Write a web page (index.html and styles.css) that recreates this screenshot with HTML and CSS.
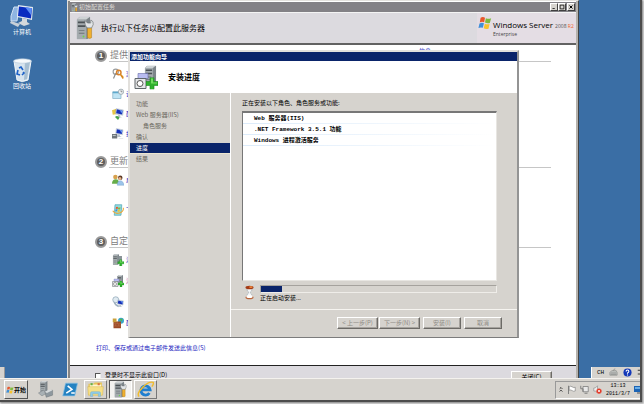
FILE: index.html
```html
<!DOCTYPE html>
<html lang="zh-CN">
<head>
    <meta charset="UTF-8">
    <meta name="viewport" content="width=device-width, initial-scale=1.0">
    <title>初始配置任务</title>
    <link rel="stylesheet" href="styles.css">
</head>
<body>
    <!-- Shared icons -->
    <svg class="sprite" aria-hidden="true">
        <symbol id="flag" viewBox="0 0 16 16">
            <path d="M3 2Q5.500 .5 8 2L7 7Q4.500 6 2 7.300Z" fill="#e8562a"/>
            <path d="M9 2.500Q12 4 15 2.500L13.500 8Q11 9 8 7.500Z" fill="#7fba3c"/>
            <path d="M1.700 8.500Q4.500 7 6.800 8.300L5.500 13.500Q3 12.500 .5 13.700Z" fill="#3f8fd8"/>
            <path d="M7.800 8.800Q10.500 10 13.200 9L12 14.500Q9 15.500 6.500 14Z" fill="#f8c22c"/>
        </symbol>
        <symbol id="server" viewBox="0 0 16 24">
            <path d="M1 3L4 0H15V21L12 24H1Z" fill="#7d858a"/>
            <path d="M1 3H11V24H1Z" fill="#a4abae"/>
            <path d="M1 3L4 0H15L11 3Z" fill="#cdd2d4"/>
            <path d="M2 5H10V7H2ZM2 9H10V11H2Z" fill="#4b5256"/>
            <path d="M3 14H9V15H3ZM3 17H9V18H3Z" fill="#6c7478"/>
            <circle cx="8" cy="21" r="1" fill="#6ad54a"/>
        </symbol>
        <symbol id="wrench" viewBox="0 0 12 24">
            <path d="M4 9H9V22Q7 24 4 22Z" fill="#f0b02e" stroke="#a8741a" stroke-width=".6"/>
            <path d="M1 1L4 4L8 4L8 0Q12 2 11 6L9 10H4Q0 7 1 1Z" fill="#e3e6e8" stroke="#676d70" stroke-width=".8"/>
        </symbol>
        <symbol id="tools" viewBox="0 0 24 32">
            <use href="#server" x="0" y="1" width="20" height="30"/>
            <use href="#wrench" x="11" y="5" width="13" height="26"/>
        </symbol>
        <symbol id="plus" viewBox="0 0 12 12">
            <path d="M4 0H8V4H12V8H8V12H4V8H0V4H4Z" fill="#2fb22c" stroke="#1a8420" stroke-width=".6"/>
            <path d="M5 1H7V5H11V6H5Z" fill="#74dc62"/>
        </symbol>
        <symbol id="screen" viewBox="0 0 16 16">
            <path d="M4 1L15 3L14 11L3 9Z" fill="#dfe6ee" stroke="#8193a8" stroke-width=".6"/>
            <path d="M5 2L14 4L13 10L4 8Z" fill="#1530b8"/>
            <path d="M9 3L14 4L13 8Z" fill="#6e9bf2"/>
            <path d="M7 10L10 11V13L13 14L8 15L4 13L7 12Z" fill="#b9c3cb"/>
        </symbol>
        <symbol id="add-role" viewBox="0 0 24 24">
            <use href="#server" x="1" y="0" width="14" height="22"/>
            <path d="M13 4H20V17H13Z" fill="#8b9499"/>
            <use href="#plus" x="11" y="11" width="13" height="13"/>
        </symbol>
        <symbol id="add-feature" viewBox="0 0 24 24">
            <use href="#server" x="9" y="0" width="15" height="19"/>
            <path d="M4 8H14V13H4Z" fill="#b9bcf0" stroke="#666ca8" stroke-width=".6"/>
            <path d="M1 13H12V23H1Z" fill="#e4e6e8" stroke="#60676b"/>
            <circle cx="6" cy="18" r="3" fill="#fff" stroke="#555"/>
            <use href="#plus" x="12" y="12" width="12" height="12"/>
        </symbol>
    </svg>

    <div class="screen">
        <main class="desktop">
            <nav class="shortcuts">
                <a class="shortcut" href="#computer">
                    <svg viewBox="0 0 24 24">
                        <path d="M1 12L4 3H9L7 17H1Z" fill="#8fb5e2" stroke="#cfe0f3"/>
                        <path d="M8 1L23 3L22 16L7 13Z" fill="#e3e9ef"/>
                        <path d="M9 2.500L22 4.300L21 14.500L8 12Z" fill="#0a2cc0"/>
                        <path d="M15 3L22 4.300L21 11Z" fill="#5a8cf4"/>
                        <path d="M12 14L17 15V18L20 20L14 22L8 19L12 17Z" fill="#d3d8dc"/>
                        <path d="M1 17L10 20L8 23L0 19Z" fill="#c8d0d8"/>
                    </svg>
                    计算机
                </a>
                <a class="shortcut" href="#recycle">
                    <svg viewBox="0 0 24 24">
                        <path d="M4 3L21 3L18 22Q12 25 7 22Z" fill="#d7e4ee" stroke="#f4f8fb"/>
                        <path d="M15 4H20L17 21L14 22Z" fill="#a7bfd2"/>
                        <ellipse cx="12.500" cy="3" rx="9" ry="2.200" fill="#f6f9fb" stroke="#b4c8d8" stroke-width=".6"/>
                        <path d="M9 10L11 9L13 12M8 12L7 16L10 17M12 17L14 15L13 14" fill="none" stroke="#1e62c8" stroke-width="1.600"/>
                    </svg>
                    回收站
                </a>
            </nav>

            <section class="window">
                <header class="titlebar">
                    <svg class="title-icon" viewBox="0 0 24 32"><use href="#tools"/></svg>
                    <span class="title-text">初始配置任务</span>
                    <button class="caption-button" aria-label="最小化"><svg viewBox="0 0 8 8"><path d="M2 6H5" stroke="#000"/></svg></button>
                    <button class="caption-button" aria-label="最大化"><svg viewBox="0 0 8 8"><path d="M1.500 1.500H6.500V6.500H1.500Z" fill="none" stroke="#000"/></svg></button>
                    <button class="caption-button close" aria-label="关闭窗口"><svg viewBox="0 0 8 8"><path d="M2 2L6 6M6 2L2 6" stroke="#000" stroke-width="1.300"/></svg></button>
                </header>
                <div class="banner">
                    <svg class="banner-icon" viewBox="0 0 24 32"><use href="#tools"/></svg>
                    <h1>执行以下任务以配置此服务器</h1>
                    <div class="brand">
                        <svg class="brand-flag" viewBox="0 0 16 16"><use href="#flag"/></svg>
                        <div>
                            <div class="brand-name">Windows Server <small>2008 <b>R2</b></small></div>
                            <div class="brand-edition">Enterprise</div>
                        </div>
                    </div>
                </div>

                <div class="tasks">
                    <section class="group">
                        <h2>
                            <span class="step">1</span>
                            <span class="group-title">提供</span>
                            <a class="group-help" href="#help">信息</a>
                        </h2>
                        <ul>
                            <li>
                                <svg viewBox="0 0 16 16"><circle cx="5" cy="5" r="3.500" fill="none" stroke="#9a9d9e" stroke-width="1.500"/><path d="M5 7L2 14" stroke="#888" stroke-width="1.500"/><circle cx="9" cy="6" r="3" fill="none" stroke="#d9822b" stroke-width="2"/><path d="M11 8L15 14M13 12L15 11" stroke="#d98a20" stroke-width="2"/></svg>
                                <a href="#activate">激</a>
                            </li>
                            <li>
                                <svg viewBox="0 0 16 16"><path d="M1 5H12V14H1Z" fill="#bfe4f4" stroke="#8ab3c8"/><path d="M1 5H12V7H1Z" fill="#5fa9cc"/><circle cx="12" cy="5" r="3.500" fill="#eef3f5" stroke="#8e9ba1"/><path d="M12 3V5H14" fill="none" stroke="#555" stroke-width=".8"/></svg>
                                <a href="#timezone">设</a>
                            </li>
                            <li>
                                <svg viewBox="0 0 16 16"><path d="M0 3L6 1L7 8L1 9Z" fill="#e6c645"/><use href="#screen" x="2" y="0" width="14" height="14"/><path d="M4 12Q7 9 10 13L8 16Z" fill="#49a54a"/></svg>
                                <a href="#network">配</a>
                            </li>
                            <li>
                                <svg viewBox="0 0 16 16"><use href="#screen" x="2" y="0" width="14" height="13"/><path d="M0 8H7V14H0Z" fill="#70777b"/><path d="M1 10H5M9 14H15" stroke="#dce1e4"/></svg>
                                <a href="#domain">提</a>
                            </li>
                        </ul>
                    </section>

                    <section class="group updates">
                        <h2>
                            <span class="step">2</span>
                            <span class="group-title">更新</span>
                        </h2>
                        <ul>
                            <li>
                                <svg viewBox="0 0 16 16"><circle cx="4.500" cy="4" r="3" fill="#d8a14e"/><path d="M0 13Q0 7 5 7T9 13Z" fill="#67ad49"/><circle cx="11" cy="5" r="3" fill="#5d3b28"/><circle cx="10.500" cy="6" r="2" fill="#e7b286"/><path d="M7 15Q7 9 11 9T16 15Z" fill="#9cc4ea" stroke="#6a98c4" stroke-width=".5"/></svg>
                                <a href="#feedback">启</a>
                            </li>
                            <li>
                                <svg viewBox="0 0 16 16"><path d="M4 1H13L12 15H3Z" fill="#8fdbe0" stroke="#58a9b8"/><use href="#flag" x="4" y="3" width="8" height="8"/><path d="M1 9Q4 14 10 12T15 5" fill="none" stroke="#eba73a" stroke-width="1.500"/></svg>
                                <a href="#download">下</a>
                            </li>
                        </ul>
                    </section>

                    <section class="group customize">
                        <h2>
                            <span class="step">3</span>
                            <span class="group-title">自定</span>
                        </h2>
                        <ul>
                            <li>
                                <svg viewBox="0 0 24 24"><use href="#add-role"/></svg>
                                <a href="#roles">添</a>
                            </li>
                            <li>
                                <svg viewBox="0 0 24 24"><use href="#add-feature"/></svg>
                                <a class="visited" href="#features">添</a>
                            </li>
                            <li>
                                <svg viewBox="0 0 16 16"><circle cx="5" cy="5" r="4" fill="#dfeaf1" stroke="#93a8b8"/><path d="M3 8Q4 12 9 14" fill="none" stroke="#9fb1bf" stroke-width="2"/><use href="#screen" x="5" y="4" width="11" height="12"/></svg>
                            </li>
                            <li>
                                <svg viewBox="0 0 16 16"><circle cx="12" cy="5" r="4" fill="#39a5c9"/><path d="M10 3L14 2L13 6Z" fill="#53b848"/><path d="M2 6H12V15H2Z" fill="#9b4a26"/><path d="M2 9H12M2 12H12M7 6V9M5 9V12M9 9V12" stroke="#c07a54" stroke-width=".6"/><path d="M1 2H6V7H1Z" fill="#c9a03c"/></svg>
                                <a href="#firewall">配</a>
                            </li>
                        </ul>
                    </section>
                    <a class="print" href="#print">打印、保存或通过电子邮件发送此信息(S)</a>
                </div>

                <footer class="window-footer">
                    <label><input type="checkbox">登录时不显示此窗口(D)</label>
                    <button class="button">关闭(C)</button>
                </footer>
            </section>
        </main>

        <section class="dialog" role="dialog" aria-labelledby="dialog-title">
            <header class="dialog-title" id="dialog-title">添加功能向导</header>
            <div class="dialog-banner">
                <svg viewBox="0 0 24 24"><use href="#add-feature"/></svg>
                <h2>安装进度</h2>
            </div>
            <div class="dialog-body">
                <nav class="steps">
                    <a href="#s1">功能</a>
                    <a href="#s2">Web 服务器(IIS)</a>
                    <a class="sub" href="#s3">角色服务</a>
                    <a href="#s4">确认</a>
                    <a class="current" href="#s5">进度</a>
                    <a href="#s6">结果</a>
                </nav>
                <div class="pane">
                    <div class="install">
                        <p>正在安装以下角色、角色服务或功能:</p>
                        <ul class="features">
                            <li>Web 服务器(IIS)</li>
                            <li>.NET Framework 3.5.1 功能</li>
                            <li>Windows 进程激活服务</li>
                        </ul>
                        <div class="status">
                            <svg viewBox="0 0 10 16"><path d="M2 3Q2 7 4.500 8Q2 9 2 13H8Q8 9 5.500 8Q8 7 8 3Z" fill="#f4f6f7" stroke="#9aa4aa" stroke-width=".7"/><ellipse cx="5" cy="2.500" rx="4.500" ry="2" fill="#a33a16"/><ellipse cx="6.500" cy="2" rx="2" ry="1" fill="#f08a3c"/><ellipse cx="5" cy="13.500" rx="4.500" ry="2" fill="#b8653c"/><ellipse cx="5" cy="12.500" rx="3.500" ry="1.700" fill="#fff"/></svg>
                            <div class="status-info">
                                <progress id="progress" value="9" max="100"></progress>
                                <label for="progress">正在启动安装...</label>
                            </div>
                        </div>
                    </div>
                    <div class="actions">
                        <button class="button" disabled>&lt; 上一步(P)</button>
                        <button class="button" disabled>下一步(N) &gt;</button>
                        <button class="button install-button" disabled>安装(I)</button>
                        <button class="button cancel-button" disabled>取消</button>
                    </div>
                </div>
            </div>
        </section>

        <div class="language-bar">
            <span>CH</span>
            <svg viewBox="0 0 10 10"><path d="M1 5L3 3H8L9 5V8H1Z" fill="#c2c4c2" stroke="#858885" stroke-width=".7"/><path d="M2 5.500H8M2 7H8M5 3Q5 1 7 1" fill="none" stroke="#777" stroke-width=".6"/></svg>
            <svg viewBox="0 0 10 10"><circle cx="5" cy="5" r="4.500" fill="#1438b8"/><path d="M3.500 4Q3.500 2.300 5 2.300T6.500 4Q6.500 5 5 5.500V6.300M5 7.200V8.200" fill="none" stroke="#fff" stroke-width="1.200"/></svg>
            <svg class="options" viewBox="0 0 4 10"><path d="M1 2H4M1 7H4" stroke="#000"/></svg>
        </div>

        <footer class="taskbar">
            <button class="start"><svg viewBox="0 0 16 16"><use href="#flag"/></svg>开始</button>
            <button class="task" aria-label="服务器管理器">
                <svg viewBox="0 0 24 24"><use href="#server" x="3" y="0" width="13" height="18"/><path d="M2 17L9 13L14 17L7 21Z" fill="#a9b1b5" stroke="#6f777b" stroke-width=".6"/><path d="M11 15L22 13V20L13 23Z" fill="#8e989e" stroke="#646c70" stroke-width=".6"/><path d="M11 15L17 12L22 13L14 17Z" fill="#d6dadc"/></svg>
            </button>
            <button class="task" aria-label="PowerShell">
                <svg viewBox="0 0 24 24"><path d="M5 3H22L18 21H1Z" fill="#2683c2" stroke="#8fc4e4"/><path d="M8 7L14 12L6 17M13 17H18" fill="none" stroke="#fff" stroke-width="2.200"/></svg>
            </button>
            <button class="task raised" aria-label="资源管理器">
                <svg viewBox="0 0 24 24"><path d="M2 4H9L11 2H21V20H2Z" fill="#e6c557"/><path d="M4 5H20V10H4Z" fill="#fff7cf"/><path d="M5 3H8V6H5Z" fill="#64af4b"/><path d="M15 3H18V6H15Z" fill="#dc7041"/><path d="M1 8H23L22 20H2Z" fill="#f6df86" stroke="#d2ad42" stroke-width=".6"/><path d="M5 22V17Q5 15 7 15H17Q19 15 19 17V22H16V18H8V22Z" fill="#8fcbe9" stroke="#5ba3c9" stroke-width=".5"/></svg>
            </button>
            <button class="task raised active" aria-label="初始配置任务">
                <svg viewBox="0 0 24 32"><use href="#tools"/></svg>
            </button>
            <button class="task raised" aria-label="Internet Explorer">
                <svg viewBox="0 0 24 24"><path d="M17.500 17A6.500 6.500 0 1 1 18.500 12.500H7" fill="none" stroke="#1f7fd0" stroke-width="4"/><path d="M3 22Q-1 18 8 9T23 2Q24 4 21 8" fill="none" stroke="#f0bb2c" stroke-width="2"/></svg>
            </button>
            <div class="tray">
                <svg class="chevron" viewBox="0 0 6 10"><path d="M1 4L3 2L5 4M1 8L3 6L5 8" fill="none" stroke="#111" stroke-width="1.200"/></svg>
                <svg viewBox="0 0 12 12"><path d="M2 1V12" stroke="#777" stroke-width="1.200"/><path d="M3 2Q5 1 7 2.500T11 3V8Q9 9 7 7.500T3 7Z" fill="#fff" stroke="#777" stroke-width=".8"/></svg>
                <svg viewBox="0 0 12 12"><path d="M4 2H11V9H4Z" fill="#e8e8e8" stroke="#777"/><path d="M1 1V5H4V9M6 11H10" fill="none" stroke="#777" stroke-width="1.200"/></svg>
                <svg viewBox="0 0 12 12"><path d="M1 4H3L6 1V10L3 8H1Z" fill="#eee" stroke="#888" stroke-width=".8"/><circle cx="8" cy="8" r="3.500" fill="#e33a28"/><path d="M6.500 6.500L9.500 9.500M9.500 6.500L6.500 9.500" stroke="#fff"/></svg>
                <time datetime="2011-03-07T13:13">13:13<br>2011/3/7</time>
                <svg class="show-desktop" viewBox="0 0 6 8"><path d="M0 0H6V6H0Z" fill="#1d64b4"/><path d="M1 1H6V3H1Z" fill="#69aee8"/><path d="M3 7H6" stroke="#555"/></svg>
            </div>
        </footer>
    </div>
</body>
</html>
```
FILE: styles.css
```css
* {
    margin: 0;
    padding: 0;
    box-sizing: border-box;
}

body {
    min-height: 100vh;
    display: flex;
    padding: 0 4px 4px 0;
    background: #fff;
    font: 6px/8px "Noto Sans CJK SC", sans-serif;
    color: #000;
    overflow: hidden;
}

ul {
    list-style: none;
}

a {
    color: #1c1cc0;
    text-decoration: none;
}

button,
input {
    font: inherit;
    color: inherit;
}

svg {
    display: block;
    flex: none;
}

.sprite {
    position: absolute;
    width: 0;
    height: 0;
}

.screen {
    position: relative;
    flex: 1;
    display: flex;
    flex-direction: column;
    height: calc(100vh - 4px);
    background: #3a6ea5;
    box-shadow: 1px 1px 1px 1px #4c4c4c, 2px 2px 2px 2px #aaa;
}

.desktop {
    flex: 1;
    min-height: 0;
    display: flex;
    padding-right: 61px;
    overflow: hidden;
}

/* Desktop shortcuts */
.shortcuts {
    width: 67px;
    display: flex;
    flex-direction: column;
    gap: 22px;
    padding-top: 4px;
}

.shortcut {
    display: flex;
    flex-direction: column;
    align-items: center;
    width: 44px;
    color: #fff;
}

.shortcut svg {
    width: 24px;
    height: 24px;
}

/* End of the docked toolbar above the start button */
.shortcuts::after {
    content: "";
    width: 4px;
    height: 11px;
    margin-top: auto;
    border-right: 1px solid #999;
    background: #d6d3ce;
}

/* Main window */
.window {
    flex: 1;
    display: flex;
    flex-direction: column;
    min-width: 0;
    border: 1px solid #e4e2de;
    border-right-color: #444;
    border-bottom: 0;
    background: #fff;
    box-shadow: inset 2px 0 0 #858585, inset -2px 0 0 #b5b2ad;
    padding: 1px 2px 0;
}

.titlebar {
    display: flex;
    align-items: center;
    height: 10px;
    padding: 0 1px;
    background: #838186;
    color: #dedbd6;
}

.title-icon {
    width: 7px;
    height: 9px;
    margin-right: 1px;
}

.title-text {
    flex: 1;
}

.caption-button {
    width: 8px;
    height: 8px;
    border: 1px solid;
    border-color: #fff #404040 #404040 #fff;
    background: #d6d3ce;
}

.close {
    margin-left: 1px;
}

.caption-button svg {
    width: 6px;
    height: 6px;
}

.banner {
    display: flex;
    align-items: center;
    height: 33px;
    border-top: 1px solid #f4f4f4;
    border-bottom: 2px solid #626262;
    padding-left: 6px;
    background: #dcdadf;
}

.banner-icon {
    width: 18px;
    height: 26px;
}

.banner h1 {
    flex: 1;
    margin-left: 7px;
    font-size: 8px;
    font-weight: 400;
}

.brand {
    align-self: stretch;
    display: flex;
    gap: 1px;
    width: 99px;
    padding: 3px 0 0 1px;
    background: #e4dde4;
    font-family: "Open Sans", sans-serif;
}

.brand-flag {
    width: 14px;
    height: 14px;
}

.brand-name {
    padding-top: 4px;
    font-size: 8px;
    line-height: 10px;
    white-space: nowrap;
}

.brand-name small {
    font-size: 5px;
    color: #555;
}

.brand-name b {
    color: #f0642c;
    font-weight: 400;
}

.brand-edition {
    font-size: 5px;
    line-height: 6px;
    color: #444;
}

.tasks {
    flex: 1;
    min-height: 0;
    padding: 0 25px 0 25px;
}

.group {
    margin-bottom: 7px;
}

.group h2 {
    position: relative;
    display: flex;
    align-items: flex-end;
    gap: 2px;
    height: 17px;
    font-size: 9px;
    font-weight: 400;
    color: #808080;
}

.step {
    width: 12px;
    height: 12px;
    border: 2px solid #9a9a9a;
    border-radius: 50%;
    background: #5e5e5e;
    color: #fff;
    font: bold 8px/8px "Liberation Sans", sans-serif;
    text-align: center;
}

.group-title {
    flex: 1;
    padding-left: 1px;
    line-height: 13px;
    border-bottom: 1px solid #c6c6c6;
}

.group-help {
    position: absolute;
    top: 2px;
    right: 120px;
    font-size: 6px;
    line-height: 8px;
}

.group ul {
    display: flex;
    flex-direction: column;
    padding: 2px 0 0 17px;
}

.group li {
    display: flex;
    align-items: center;
    gap: 2px;
    height: 20px;
}

.group li svg {
    width: 12px;
    height: 12px;
}

.updates {
    margin-bottom: 11px;
}

.updates ul {
    gap: 10px;
}

.customize ul {
    gap: 1px;
}

.group .visited {
    color: #b060b0;
}

.print {
    display: inline-block;
    padding: 4px 1px;
}

.window-footer {
    display: flex;
    align-items: flex-start;
    justify-content: space-between;
    height: 13px;
    padding: 5px 24px 0 25px;
    border-top: 1px solid #222;
    background: #dcdadf;
}

.window-footer label {
    display: flex;
    gap: 4px;
}

.window-footer input {
    appearance: none;
    width: 6px;
    height: 6px;
    margin-top: 2px;
    border: 1px solid;
    border-color: #555 #eee #eee #555;
    background: #fff;
}

.button {
    width: 41px;
    height: 12px;
    border: 1px solid;
    border-color: #fff #6c6a66 #6c6a66 #fff;
    box-shadow: inset -1px -1px 0 #a5a29d;
    background: #d6d3ce;
    line-height: 8px;
    white-space: nowrap;
}

.button:disabled {
    color: #8f8c86;
}

/* Wizard */
.dialog {
    position: absolute;
    top: 50px;
    left: 128px;
    right: 121px;
    border: 2px solid;
    border-color: #e2e0dc #949494 #7c7c7c #e2e0dc;
    border-bottom-width: 1px;
    background: #d6d3ce;
}

.dialog-title {
    height: 9px;
    padding-left: 1px;
    background: #0a246a;
    color: #fff;
    font-weight: 700;
    line-height: 9px;
}

.dialog-banner {
    display: flex;
    align-items: center;
    gap: 10px;
    height: 32px;
    padding-left: 4px;
    background: #fff;
}

.dialog-banner svg {
    width: 24px;
    height: 25px;
}

.dialog-banner h2 {
    font-size: 8px;
    line-height: 12px;
}

.dialog-body {
    display: grid;
    grid-template-columns: 101px 1fr;
    min-height: 244px;
}

.steps {
    padding-top: 6px;
    border-right: 1px solid #fff;
}

.steps a {
    display: block;
    height: 11px;
    padding-left: 6px;
    color: #6b675d;
    line-height: 10px;
    border-bottom: 1px solid transparent;
}

.steps .sub {
    padding-left: 13px;
}

.steps .current {
    background: #0a246a;
    color: #fff;
    border-color: #ece5cf;
}

.pane {
    display: flex;
    flex-direction: column;
    min-width: 0;
}

.install {
    flex: 1;
    display: flex;
    flex-direction: column;
    padding: 6px 20px 7px 11px;
}

.features {
    flex: 1;
    margin-top: 4px;
    border: 1px solid;
    border-color: #777 #e8e6e2 #e8e6e2 #777;
    border-top-width: 2px;
    background: #fff;
    font-family: "Liberation Mono", "Noto Sans CJK SC", monospace;
    font-weight: 700;
}

.features li {
    height: 11px;
    padding-left: 11px;
    line-height: 11px;
    background: linear-gradient(to right, #dcebfa, #fff) bottom / 100% 1px no-repeat;
}

.status {
    display: flex;
    gap: 6px;
    padding: 4px 0 0 3px;
}

.status svg {
    width: 9px;
    height: 15px;
}

.status-info {
    flex: 1;
    display: flex;
    flex-direction: column;
    gap: 1px;
}

progress {
    appearance: none;
    display: block;
    width: 100%;
    height: 8px;
    border: 1px solid;
    border-color: #a5a29d #efede9 #efede9 #a5a29d;
}

progress::-webkit-progress-bar {
    background: #d6d3ce;
}

progress::-webkit-progress-value {
    background: #0a246a;
}

.actions {
    display: flex;
    justify-content: flex-end;
    gap: 1px;
    padding: 7px 15px 8px;
    border-top: 1px solid #f6f4f0;
}

.install-button,
.cancel-button {
    width: 38px;
    margin-left: 2px;
}

/* Taskbar */
.taskbar {
    display: flex;
    align-items: center;
    gap: 2px;
    height: 22px;
    padding-left: 4px;
    border-top: 1px solid #f4f2ee;
    background: #d6d3ce;
}

.start {
    display: flex;
    align-items: center;
    width: 24px;
    height: 19px;
    margin-right: 4px;
    padding-left: 1px;
    border: 1px solid;
    border-color: #fff #555 #555 #fff;
    background: #d6d3ce;
    font-weight: 700;
    white-space: nowrap;
}

.start svg {
    width: 8px;
    height: 8px;
}

.task {
    display: flex;
    align-items: center;
    justify-content: center;
    width: 23px;
    height: 19px;
    border: 1px solid transparent;
    background: none;
}

.task svg {
    width: 17px;
    height: 17px;
}

.raised {
    border-color: #fff #777 #777 #fff;
}

.active {
    border-color: #555 #fff #fff #555;
    background: #f3f2f0;
}

.tray {
    display: flex;
    align-items: center;
    justify-content: space-between;
    gap: 3px;
    width: 85px;
    height: 18px;
    margin-left: auto;
    padding-left: 3px;
    border: 1px solid;
    border-color: #999 #fff #fff #999;
    border-right: 0;
}

.tray svg {
    width: 9px;
    height: 9px;
}

.tray .chevron {
    width: 4px;
    height: 7px;
}

.tray .show-desktop {
    width: 6px;
    height: 8px;
}

.tray time {
    font: 5px/8px "Liberation Mono", monospace;
    text-align: center;
}

.language-bar {
    position: absolute;
    right: 0;
    bottom: 22px;
    display: flex;
    align-items: center;
    justify-content: space-between;
    width: 49px;
    height: 11px;
    padding-left: 5px;
    border-left: 1px solid #fff;
    background: #d6d3ce;
    font: 6px/8px "Liberation Mono", monospace;
}

.language-bar svg {
    width: 9px;
    height: 9px;
}

.language-bar .options {
    width: 3px;
}
```
